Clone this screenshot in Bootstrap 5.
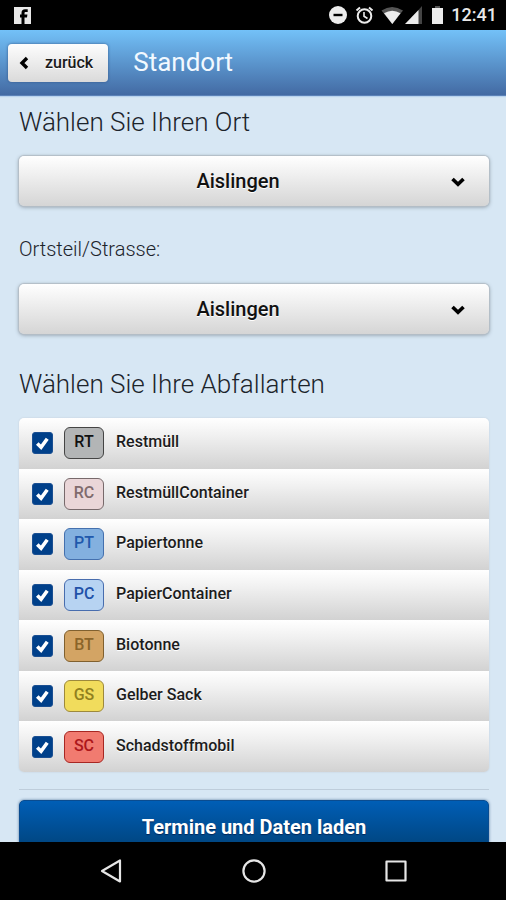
<!DOCTYPE html>
<html lang="de">
<head>
<meta charset="utf-8">
<meta name="viewport" content="width=device-width, initial-scale=1">
<title>Standort</title>
<link href="https://cdn.jsdelivr.net/npm/bootstrap@5.3.0/dist/css/bootstrap.min.css" rel="stylesheet">
<style>
  body { font-family: Roboto, "Liberation Sans", sans-serif; background: #d7e7f4; color: #1c242b; }
  .status-bar { height: 30px; padding: 0 9px 0 14px; font-size: 18px; line-height: 24px; font-weight: 500; color: #e8e8e8; }
  .app-header { height: 66px; padding: 0 8px; background: linear-gradient(#73c1f8, #436aa3); border-bottom: 1px solid #5b82b8; box-shadow: 0 1px 1px #b9d3ee; }
  .btn-back { height: 38px; padding: 0 15px 0 11px; gap: 16px; border: 0; border-radius: 4px; background: linear-gradient(#fdfdfd, #dadada); box-shadow: 0 0 3px #35598c; font-size: 16px; font-weight: 500; color: #1a1a1a; text-shadow: 0 1px 0 #fff; }
  .app-title { margin-left: 25px; padding-bottom: 2px; font-size: 26px; line-height: 32px; font-weight: 400; color: #f2f9ff; }
  .page-main { min-height: 0; padding: 10px 17px 0 19px; }
  .section-title { font-size: 26px; line-height: 32px; font-weight: 300; margin: 0 0 18px; }
  .picker + .section-title { margin-top: 34px; }
  .field-label { font-size: 20px; line-height: 26px; font-weight: 300; margin: 0 0 22px; }
  .picker { position: relative; margin-bottom: 30px; }
  .picker select { height: 50px; padding: 0 48px 1px 16px; border: 0; border-radius: 5px; background: linear-gradient(#fff, #d5d5d5); box-shadow: 0 0 1px 1px #b4bec7, 0 1px 4px #8794a0; font-size: 20px; font-weight: 500; color: #111; text-align: center; text-align-last: center; text-shadow: 0 1px 0 #fff; }
  .picker svg { position: absolute; right: 23px; top: 20px; pointer-events: none; }
  .waste-list { min-height: 354px; border-radius: 5px; overflow: hidden; box-shadow: 0 0 2px #c0cbd4; }
  .waste-row { padding: 0 13px; font-size: 16px; font-weight: 500; background: linear-gradient(#fff, #f0f0f0 35%, #d2d2d2); color: #1c1c1c; text-shadow: 0 1px 0 #fff; cursor: pointer; }
  .waste-name { padding-bottom: 2px; }
  .waste-row .form-check-input { width: 21px; height: 22px; margin: 0; border-radius: 3px; border: 1px solid #1a4f92; }
  .waste-row .form-check-input:checked { background-color: #00408a; background-size: 100% 100%; background-image: url("data:image/svg+xml,%3Csvg xmlns='http://www.w3.org/2000/svg' viewBox='0 0 20 20'%3E%3Cpath d='M4.5 10.5 8.500 14.5 15 5.5' fill='none' stroke='%23fff' stroke-width='3.8'/%3E%3C/svg%3E"); }
  .code { width: 40px; height: 32px; margin: 0 12px 0 11px; border: 1px solid; border-radius: 6px; font-size: 16px; line-height: 28px; text-align: center; text-shadow: none; }
  .code-rt { background: #b3b5b6; border-color: #444; color: #111; }
  .code-rc { background: #ead6d8; border-color: #77696b; color: #806b6d; }
  .code-pt { background: #83b0df; border-color: #4470ae; color: #2159ac; }
  .code-pc { background: #b7d3f2; border-color: #486dae; color: #2151a8; }
  .code-bt { background: #d3a464; border-color: #80602f; color: #8b6429; }
  .code-gs { background: #f1dc5c; border-color: #9d893c; color: #91801e; }
  .code-sc { background: #f17b70; border-color: #a72723; color: #ad171b; }
  .divider { margin: 17px 0 10px; border-top: 1px solid #becddb; opacity: 1; }
  .btn-load { height: 54px; padding: 0; border: 1px solid #0a4c90; border-radius: 5px; background: linear-gradient(#005eb6, #004177); box-shadow: 0 0 3px #53779c; font-size: 20px; line-height: 26px; font-weight: 700; color: #fff; text-shadow: 0 1px 1px #00275a; }
  .nav-keys { height: 58px; padding: 0 39px 0 41px; }
</style>
<script src="https://cdn.jsdelivr.net/npm/bootstrap@5.3.0/dist/js/bootstrap.bundle.min.js" defer></script>
</head>
<body class="vh-100 d-flex flex-column overflow-hidden">
  <div class="status-bar bg-black d-flex align-items-center justify-content-between flex-shrink-0">
    <svg width="17" height="17" viewBox="0 0 17 17" aria-hidden="true"><path fill="#e8e8e8" d="M0 0h17v17H0z"/><path d="M7.500 17v-6.500H6V7.500h1.500V6c0-2.600 1.300-3.800 3.500-3.800h2.700v2.700h-1.900c-1 0-1.300.5-1.300 1.300v1.300h2.900l-.4 3H10.500V17z" fill="#000"/></svg>
    <div class="d-flex align-items-center">
      <svg width="116" height="20" viewBox="0 0 116 20" class="me-2" fill="#ececec" aria-label="Status">
        <circle cx="11" cy="10" r="9"/><path d="M6.500 8.800h9v2.400h-9z" fill="#000"/>
        <g fill="none" stroke="#ececec"><circle cx="37.500" cy="11" r="6.800" stroke-width="2"/><path d="M37 7v4.300l3.500 2.200" stroke-width="1.600"/><path d="M29.500 5.500 33 2.500M45.500 5.500 42 2.500" stroke-width="2"/></g>
        <path fill="#555" d="M54.500 5.500Q65 -1.500 76 5.500L65.300 19z"/><path d="M57 8.300Q65.300 3 73.500 8.300L65.300 19z"/>
        <path d="M95 1v18H79z" fill="#444"/><path d="M91.500 5V19H78z"/>
        <path fill="#555" d="M108 1h5v2h-5z"/><path d="M105 3h11v16h-11z"/>
      </svg>
      <span>12:41</span>
    </div>
  </div>

  <header class="app-header d-flex align-items-center flex-shrink-0">
    <button type="button" class="btn btn-back d-flex align-items-center">
      <svg width="10" height="14" viewBox="0 0 10 14" aria-hidden="true"><path d="M8 2 3 7l5 5" fill="none" stroke="#000" stroke-width="3.400"/></svg>
      <span>zurück</span>
    </button>
    <h1 class="app-title mb-0">Standort</h1>
  </header>

  <main class="page-main flex-grow-1 overflow-hidden">
    <h2 class="section-title"><label for="ort">Wählen Sie Ihren Ort</label></h2>
    <div class="picker">
      <select id="ort" class="form-select"><option>Aislingen</option></select>
      <svg width="16" height="12" viewBox="0 0 16 12" aria-hidden="true"><path d="M2.500 3 8 8.300 13.500 3" fill="none" stroke="#000" stroke-width="3.600"/></svg>
    </div>
    <label class="field-label d-block" for="ortsteil">Ortsteil/Strasse:</label>
    <div class="picker">
      <select id="ortsteil" class="form-select"><option>Aislingen</option></select>
      <svg width="16" height="12" viewBox="0 0 16 12" aria-hidden="true"><path d="M2.500 3 8 8.300 13.500 3" fill="none" stroke="#000" stroke-width="3.600"/></svg>
    </div>
    <h2 class="section-title">Wählen Sie Ihre Abfallarten</h2>
    <div class="waste-list d-flex flex-column">
      <label class="waste-row d-flex align-items-center flex-fill"><input class="form-check-input" type="checkbox" checked><span class="code code-rt">RT</span><span class="waste-name">Restmüll</span></label>
      <label class="waste-row d-flex align-items-center flex-fill"><input class="form-check-input" type="checkbox" checked><span class="code code-rc">RC</span><span class="waste-name">RestmüllContainer</span></label>
      <label class="waste-row d-flex align-items-center flex-fill"><input class="form-check-input" type="checkbox" checked><span class="code code-pt">PT</span><span class="waste-name">Papiertonne</span></label>
      <label class="waste-row d-flex align-items-center flex-fill"><input class="form-check-input" type="checkbox" checked><span class="code code-pc">PC</span><span class="waste-name">PapierContainer</span></label>
      <label class="waste-row d-flex align-items-center flex-fill"><input class="form-check-input" type="checkbox" checked><span class="code code-bt">BT</span><span class="waste-name">Biotonne</span></label>
      <label class="waste-row d-flex align-items-center flex-fill"><input class="form-check-input" type="checkbox" checked><span class="code code-gs">GS</span><span class="waste-name">Gelber Sack</span></label>
      <label class="waste-row d-flex align-items-center flex-fill"><input class="form-check-input" type="checkbox" checked><span class="code code-sc">SC</span><span class="waste-name">Schadstoffmobil</span></label>
    </div>
    <hr class="divider">
    <button type="button" class="btn btn-load w-100">Termine und Daten laden</button>
  </main>

  <nav class="nav-keys bg-black d-flex align-items-center flex-shrink-0" aria-label="System">
    <button type="button" class="btn border-0 p-0 flex-fill" aria-label="Zurück"><svg width="24" height="26" viewBox="0 0 24 26" fill="none" stroke="#e6e6e6" stroke-width="2.200"><path d="M20 2.500v21L2 13z" stroke-linejoin="round"/></svg></button>
    <button type="button" class="btn border-0 p-0 flex-fill" aria-label="Start"><svg width="24" height="26" viewBox="0 0 24 26" fill="none" stroke="#e6e6e6" stroke-width="2.200"><circle cx="12" cy="13" r="10.600"/></svg></button>
    <button type="button" class="btn border-0 p-0 flex-fill" aria-label="Übersicht"><svg width="24" height="26" viewBox="0 0 24 26" fill="none" stroke="#e6e6e6" stroke-width="2.200"><path d="M2.500 3.500h19v19h-19z" stroke-linejoin="round"/></svg></button>
  </nav>
</body>
</html>
